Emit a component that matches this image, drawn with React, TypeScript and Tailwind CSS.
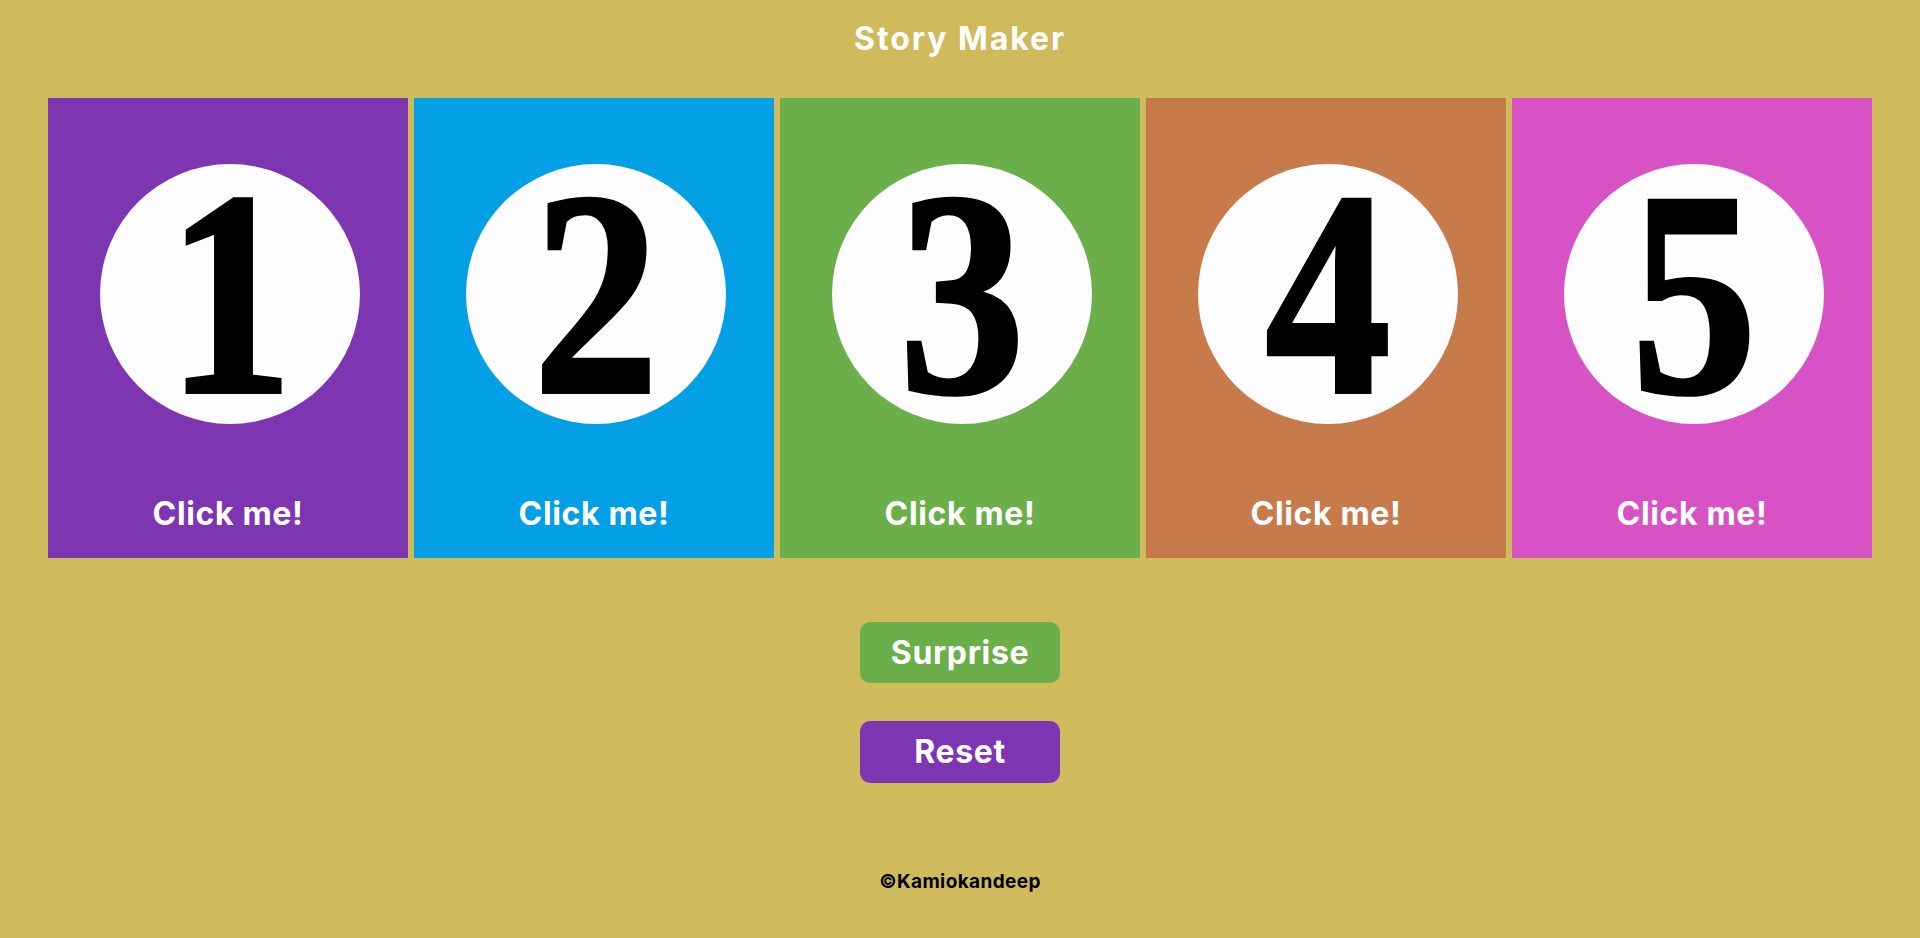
import React from "react";

const cards = [
  { n: "1", bg: "bg-[#7e35b2]" },
  { n: "2", bg: "bg-[#04a0e5]" },
  { n: "3", bg: "bg-[#6baf4b]" },
  { n: "4", bg: "bg-[#c77b4b]" },
  { n: "5", bg: "bg-[#d753c5]" },
];

export default function App() {
  return (
    <div
      className="min-h-[938px] w-full bg-[#cfbb5c] flex flex-col items-center"
      style={{ fontFamily: "Inter, 'Liberation Sans', sans-serif" }}
    >
      <h1 className="mt-[19px] text-[32px] leading-[40px] font-bold text-white tracking-[0.06em]">
        Story Maker
      </h1>
      <div className="mt-[39px] flex gap-[6px]">
        {cards.map((c) => (
          <div
            key={c.n}
            className={`${c.bg} w-[360px] h-[460px] flex flex-col items-center cursor-pointer`}
          >
            <div className="mt-[66px] ml-[4px] w-[260px] h-[260px] rounded-full bg-[#fdfcff] flex items-center justify-center">
              <span
                className="inline-block text-[292px] leading-[240px] font-bold text-black scale-x-[0.86] [-webkit-text-stroke:4px_black]"
                style={{ fontFamily: "'Liberation Serif', 'DejaVu Serif', serif" }}
              >
                {c.n}
              </span>
            </div>
            <div className="mt-[70px] text-[32px] leading-[40px] font-bold text-white tracking-[0.02em]">
              Click me!
            </div>
          </div>
        ))}
      </div>
      <button className="mt-[64px] w-[200px] h-[61px] rounded-[10px] bg-[#6baf4b] text-white text-[32px] font-bold flex items-center justify-center tracking-[0.02em]">
        Surprise
      </button>
      <button className="mt-[38px] w-[200px] h-[62px] rounded-[10px] bg-[#7e35b2] text-white text-[32px] font-bold flex items-center justify-center tracking-[0.02em]">
        Reset
      </button>
      <footer className="mt-[87px] text-[19px] leading-[24px] font-bold text-black tracking-[0.02em]">
        ©Kamiokandeep
      </footer>
    </div>
  );
}
